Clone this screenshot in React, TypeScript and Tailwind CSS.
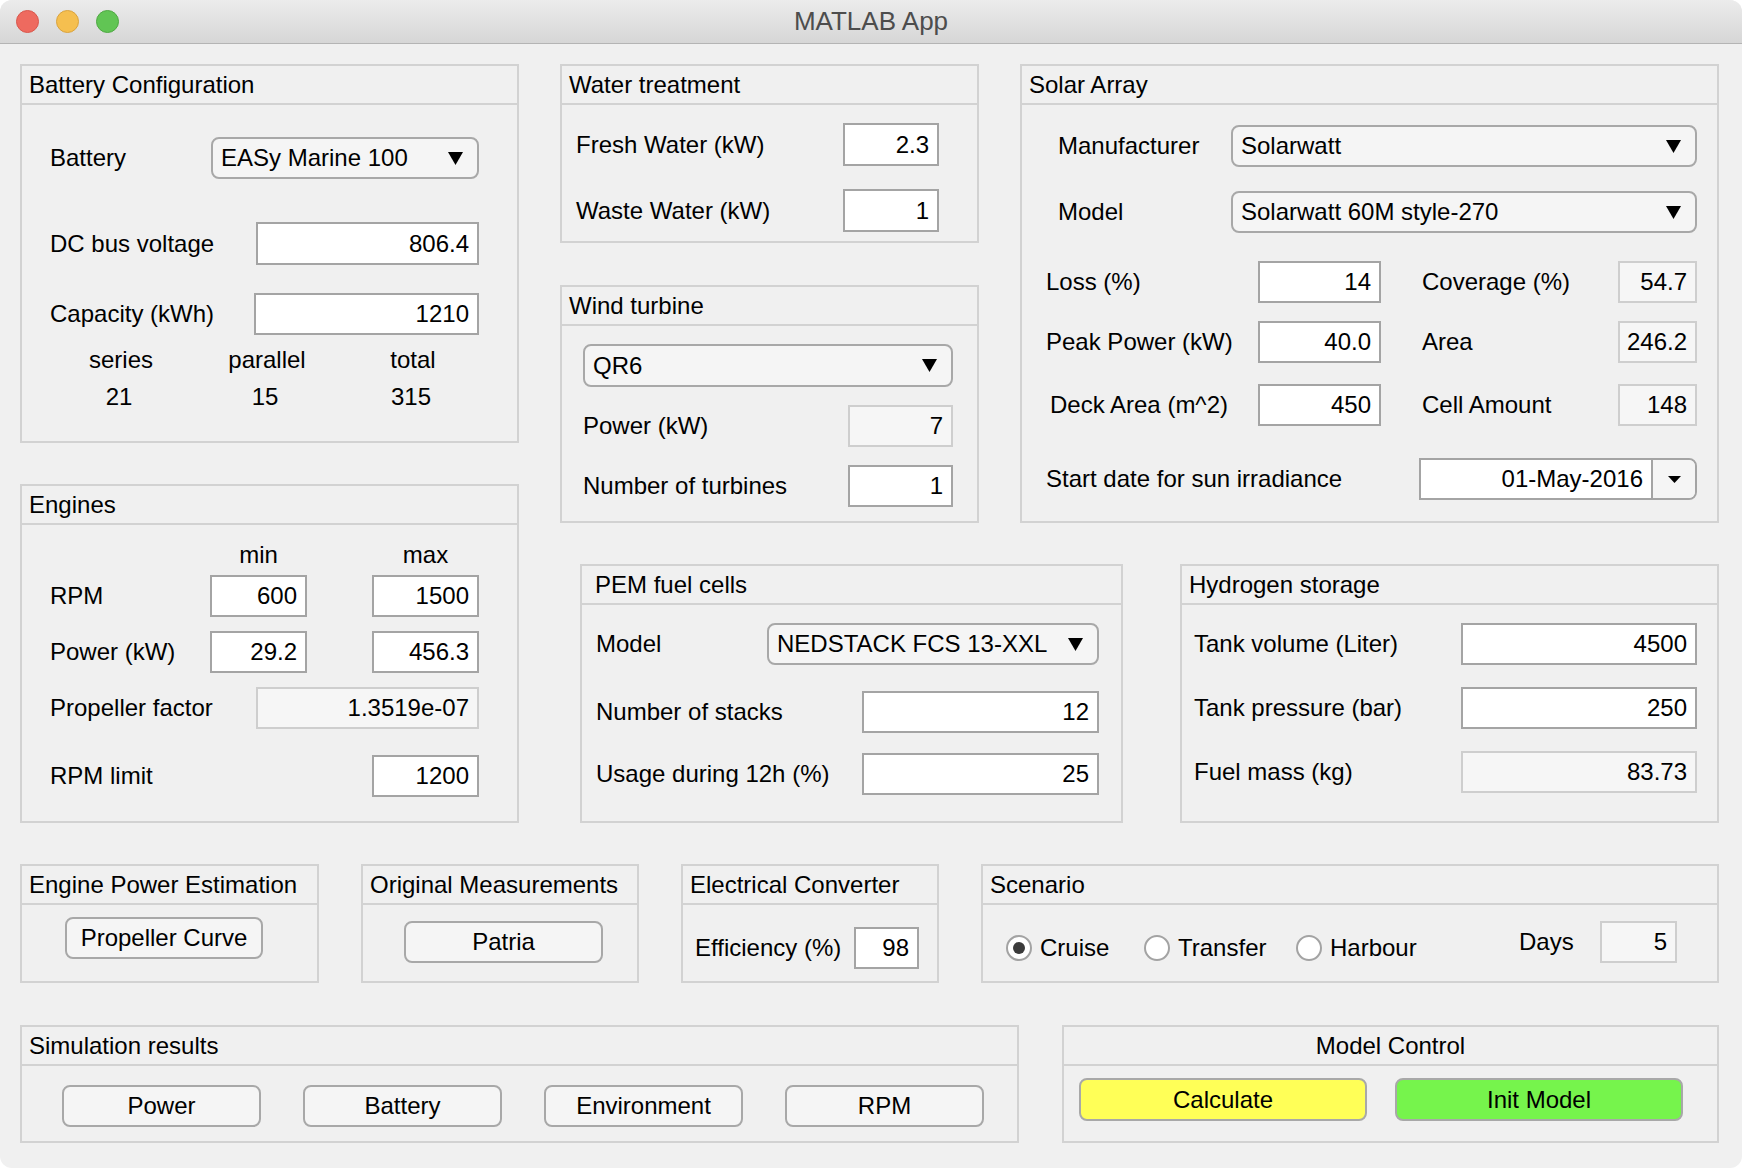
import React from "react";
import clsx from "clsx";

type Kids = { children?: React.ReactNode };

const Panel = ({
  title,
  className,
  headerClass,
  bodyClass,
  children,
}: Kids & { title: string; className?: string; headerClass?: string; bodyClass?: string }) => (
  <div className={clsx("flex flex-col border-2 border-[#d2d2d2] shrink-0", className)}>
    <div className={clsx("h-[39px] shrink-0 flex items-center border-b-2 border-[#d2d2d2]", headerClass ?? "pl-[7px]")}>
      {title}
    </div>
    <div className={clsx("flex flex-col", bodyClass)}>{children}</div>
  </div>
);

const Field = ({ value, className, readOnly }: { value: string; className?: string; readOnly?: boolean }) => (
  <div
    className={clsx(
      "h-[42px] shrink-0 flex items-center justify-end pr-[8px] border-2",
      readOnly ? "border-[#cecece] bg-[#f6f6f6]" : "border-[#a4a4a4] bg-white",
      className
    )}
  >
    {value}
  </div>
);

const Arrow = () => (
  <svg width="15" height="13" viewBox="0 0 15 13">
    <path d="M0 0 H15 L7.5 13 Z" fill="#000" />
  </svg>
);

const Dropdown = ({ value, className }: { value: string; className?: string }) => (
  <div
    className={clsx(
      "h-[42px] shrink-0 flex items-center justify-between rounded-[8px] border-2 border-[#a8a8a8] bg-[#f5f5f5] pl-[8px] pr-[14px]",
      className
    )}
  >
    <span>{value}</span>
    <Arrow />
  </div>
);

const Button = ({ label, className }: { label: string; className?: string }) => (
  <div
    className={clsx(
      "h-[42px] shrink-0 flex items-center justify-center rounded-[8px] border-2 border-[#a8a8a8]",
      className ?? "bg-[#f5f5f5]"
    )}
  >
    {label}
  </div>
);

const Radio = ({ label, checked, className }: { label: string; checked?: boolean; className?: string }) => (
  <div className={clsx("flex items-center gap-[8px] shrink-0", className)}>
    <div className="w-[26px] h-[26px] rounded-full border-2 border-[#a3a3a3] bg-white flex items-center justify-center">
      {checked && <div className="w-[12px] h-[12px] rounded-full bg-[#3b3b3b]" />}
    </div>
    <span>{label}</span>
  </div>
);

const Row = ({ className, children }: Kids & { className?: string }) => (
  <div className={clsx("flex items-center justify-between h-[42px]", className)}>{children}</div>
);

const BatteryPanel = () => (
  <Panel title="Battery Configuration" className="w-[499px] h-[379px]" bodyClass="pl-[28px] pr-[38px]">
    <Row className="mt-[32px]">
      <span>Battery</span>
      <Dropdown value="EASy Marine 100" className="w-[268px]" />
    </Row>
    <Row className="mt-[43px] h-[43px]">
      <span>DC bus voltage</span>
      <Field value="806.4" className="w-[223px] h-[43px]" />
    </Row>
    <Row className="mt-[28px]">
      <span>Capacity (kWh)</span>
      <Field value="1210" className="w-[225px]" />
    </Row>
    <div className="flex h-[28px] items-center mt-[11px] ml-[-2px]">
      <span className="w-[146px] shrink-0 text-center">series</span>
      <span className="w-[146px] shrink-0 text-center">parallel</span>
      <span className="w-[146px] shrink-0 text-center">total</span>
    </div>
    <div className="flex h-[28px] items-center mt-[9px] ml-[-4px]">
      <span className="w-[146px] shrink-0 text-center">21</span>
      <span className="w-[146px] shrink-0 text-center">15</span>
      <span className="w-[146px] shrink-0 text-center">315</span>
    </div>
  </Panel>
);

const EnginesPanel = () => (
  <Panel title="Engines" className="w-[499px] h-[339px]" bodyClass="pl-[28px] pr-[38px]">
    <div className="flex items-center h-[28px] mt-[16px]">
      <span className="flex-1" />
      <span className="w-[97px] text-center">min</span>
      <span className="w-[107px] ml-[65px] text-center">max</span>
    </div>
    <div className="flex items-center h-[42px] mt-[6px]">
      <span className="flex-1">RPM</span>
      <Field value="600" className="w-[97px]" />
      <Field value="1500" className="w-[107px] ml-[65px]" />
    </div>
    <div className="flex items-center h-[42px] mt-[14px]">
      <span className="flex-1">Power (kW)</span>
      <Field value="29.2" className="w-[97px]" />
      <Field value="456.3" className="w-[107px] ml-[65px]" />
    </div>
    <Row className="mt-[14px]">
      <span>Propeller factor</span>
      <Field value="1.3519e-07" className="w-[223px]" readOnly />
    </Row>
    <Row className="mt-[26px]">
      <span>RPM limit</span>
      <Field value="1200" className="w-[107px]" />
    </Row>
  </Panel>
);

const WaterPanel = () => (
  <Panel title="Water treatment" className="w-[419px] h-[179px]" bodyClass="pl-[14px] pr-[38px]">
    <Row className="mt-[18px] h-[43px]">
      <span>Fresh Water (kW)</span>
      <Field value="2.3" className="w-[96px] h-[43px]" />
    </Row>
    <Row className="mt-[23px] h-[43px]">
      <span>Waste Water (kW)</span>
      <Field value="1" className="w-[96px] h-[43px]" />
    </Row>
  </Panel>
);

const WindPanel = () => (
  <Panel title="Wind turbine" className="w-[419px] h-[238px]" bodyClass="pl-[21px] pr-[24px]">
    <Dropdown value="QR6" className="mt-[18px] w-full h-[43px]" />
    <Row className="mt-[18px]">
      <span>Power (kW)</span>
      <Field value="7" className="w-[105px]" readOnly />
    </Row>
    <Row className="mt-[18px]">
      <span>Number of turbines</span>
      <Field value="1" className="w-[105px]" />
    </Row>
  </Panel>
);

const SolarRow = ({
  a,
  av,
  b,
  bv,
  className,
  aClass,
}: {
  a: string;
  av: string;
  b: string;
  bv: string;
  className?: string;
  aClass?: string;
}) => (
  <div className={clsx("flex items-center h-[42px] pl-[24px]", className)}>
    <span className={clsx("w-[212px] shrink-0", aClass)}>{a}</span>
    <Field value={av} className="w-[123px]" />
    <span className="flex-1 ml-[41px]">{b}</span>
    <Field value={bv} className="w-[79px]" readOnly />
  </div>
);

const SolarPanel = () => (
  <Panel title="Solar Array" className="w-[699px] h-[459px]" bodyClass="pr-[20px]">
    <Row className="mt-[20px] pl-[36px]">
      <span>Manufacturer</span>
      <Dropdown value="Solarwatt" className="w-[466px]" />
    </Row>
    <Row className="mt-[24px] pl-[36px]">
      <span>Model</span>
      <Dropdown value="Solarwatt 60M style-270" className="w-[466px]" />
    </Row>
    <SolarRow className="mt-[28px]" a="Loss (%)" av="14" b="Coverage (%)" bv="54.7" />
    <SolarRow className="mt-[18px]" a="Peak Power (kW)" av="40.0" b="Area" bv="246.2" />
    <SolarRow
      className="mt-[21px]"
      aClass="pl-[4px]"
      a="Deck Area (m^2)"
      av="450"
      b="Cell Amount"
      bv="148"
    />
    <Row className="mt-[32px] pl-[24px]">
      <span>Start date for sun irradiance</span>
      <div className="w-[278px] h-[42px] flex border-2 border-[#a4a4a4] rounded-r-[8px] overflow-hidden">
        <div className="flex-1 bg-white flex items-center justify-end pr-[8px]">01-May-2016</div>
        <div className="w-[44px] border-l-2 border-[#a4a4a4] bg-[#f5f5f5] flex items-center justify-center">
          <svg width="13" height="7" viewBox="0 0 13 7">
            <path d="M0 0 H13 L6.5 7 Z" fill="#000" />
          </svg>
        </div>
      </div>
    </Row>
  </Panel>
);

const PemPanel = () => (
  <Panel
    title="PEM fuel cells"
    className="w-[543px] h-[259px]"
    headerClass="pl-[13px]"
    bodyClass="pl-[14px] pr-[22px]"
  >
    <Row className="mt-[18px]">
      <span>Model</span>
      <Dropdown value="NEDSTACK FCS 13-XXL" className="w-[332px]" />
    </Row>
    <Row className="mt-[26px]">
      <span>Number of stacks</span>
      <Field value="12" className="w-[237px]" />
    </Row>
    <Row className="mt-[20px]">
      <span>Usage during 12h (%)</span>
      <Field value="25" className="w-[237px]" />
    </Row>
  </Panel>
);

const HydrogenPanel = () => (
  <Panel title="Hydrogen storage" className="w-[539px] h-[259px]" bodyClass="pl-[12px] pr-[20px]">
    <Row className="mt-[18px]">
      <span>Tank volume (Liter)</span>
      <Field value="4500" className="w-[236px]" />
    </Row>
    <Row className="mt-[22px]">
      <span>Tank pressure (bar)</span>
      <Field value="250" className="w-[236px]" />
    </Row>
    <Row className="mt-[22px]">
      <span>Fuel mass (kg)</span>
      <Field value="83.73" className="w-[236px]" readOnly />
    </Row>
  </Panel>
);

const App = () => {
  return (
    <div className="w-[1742px] h-[1168px] bg-white font-['Liberation_Sans',Arial,sans-serif] text-[24px] text-black">
      <div className="h-full flex flex-col rounded-[12px] overflow-hidden bg-[#f0f0f0]">
        {/* title bar */}
        <div className="h-[44px] shrink-0 grid grid-cols-[1fr_auto_1fr] items-center border-b border-[#b4b4b4] bg-linear-to-b from-[#ececec] to-[#d6d6d6]">
          <div className="flex items-center gap-[17px] pl-[16px]">
            <div className="w-[23px] h-[23px] rounded-full bg-[#ee6a5f] border border-[#d8574c]" />
            <div className="w-[23px] h-[23px] rounded-full bg-[#f5bf4f] border border-[#d9a33e]" />
            <div className="w-[23px] h-[23px] rounded-full bg-[#61c554] border border-[#4fa843]" />
          </div>
          <div className="text-[26px] text-[#4d4d4d]">MATLAB App</div>
          <div />
        </div>

        <div className="flex flex-col pl-[20px] pt-[20px]">
          <div className="flex gap-[41px]">
            <div className="flex flex-col gap-[41px]">
              <BatteryPanel />
              <EnginesPanel />
            </div>
            <div className="flex flex-col gap-[41px]">
              <div className="flex gap-[41px]">
                <div className="flex flex-col gap-[42px]">
                  <WaterPanel />
                  <WindPanel />
                </div>
                <SolarPanel />
              </div>
              <div className="flex gap-[57px] pl-[20px]">
                <PemPanel />
                <HydrogenPanel />
              </div>
            </div>
          </div>

          <div className="flex gap-[42px] mt-[41px]">
            <Panel title="Engine Power Estimation" className="w-[299px] h-[119px]" bodyClass="pl-[43px]">
              <Button label="Propeller Curve" className="mt-[12px] w-[198px] bg-[#f5f5f5]" />
            </Panel>
            <Panel title="Original Measurements" className="w-[278px] h-[119px]" bodyClass="pl-[41px]">
              <Button label="Patria" className="mt-[16px] w-[199px] bg-[#f5f5f5]" />
            </Panel>
            <Panel title="Electrical Converter" className="w-[258px] h-[119px]" bodyClass="pl-[12px] pr-[18px]">
              <Row className="mt-[22px]">
                <span>Efficiency (%)</span>
                <Field value="98" className="w-[65px]" />
              </Row>
            </Panel>
            <Panel title="Scenario" className="w-[738px] h-[119px]" bodyClass="flex-row! items-start pl-[23px]">
              <div className="flex items-center h-[42px] mt-[22px]">
                <Radio label="Cruise" checked className="w-[138px]" />
                <Radio label="Transfer" className="w-[152px]" />
                <Radio label="Harbour" className="w-[223px]" />
              </div>
              <div className="flex items-center h-[42px] mt-[16px]">
                <span className="w-[81px]">Days</span>
                <Field value="5" className="w-[77px]" readOnly />
              </div>
            </Panel>
          </div>

          <div className="flex gap-[43px] mt-[42px]">
            <Panel title="Simulation results" className="w-[999px] h-[118px]" bodyClass="pl-[40px]">
              <div className="flex gap-[42px] mt-[19px]">
                <Button label="Power" className="w-[199px] bg-[#f5f5f5]" />
                <Button label="Battery" className="w-[199px] bg-[#f5f5f5]" />
                <Button label="Environment" className="w-[199px] bg-[#f5f5f5]" />
                <Button label="RPM" className="w-[199px] bg-[#f5f5f5]" />
              </div>
            </Panel>
            <Panel title="Model Control" className="w-[657px] h-[118px]" headerClass="justify-center" bodyClass="pl-[15px]">
              <div className="flex gap-[28px] mt-[12px]">
                <Button label="Calculate" className="w-[288px] h-[43px] bg-[#ffff57]" />
                <Button label="Init Model" className="w-[288px] h-[43px] bg-[#76f44c]" />
              </div>
            </Panel>
          </div>
        </div>
      </div>
    </div>
  );
};

export default App;
